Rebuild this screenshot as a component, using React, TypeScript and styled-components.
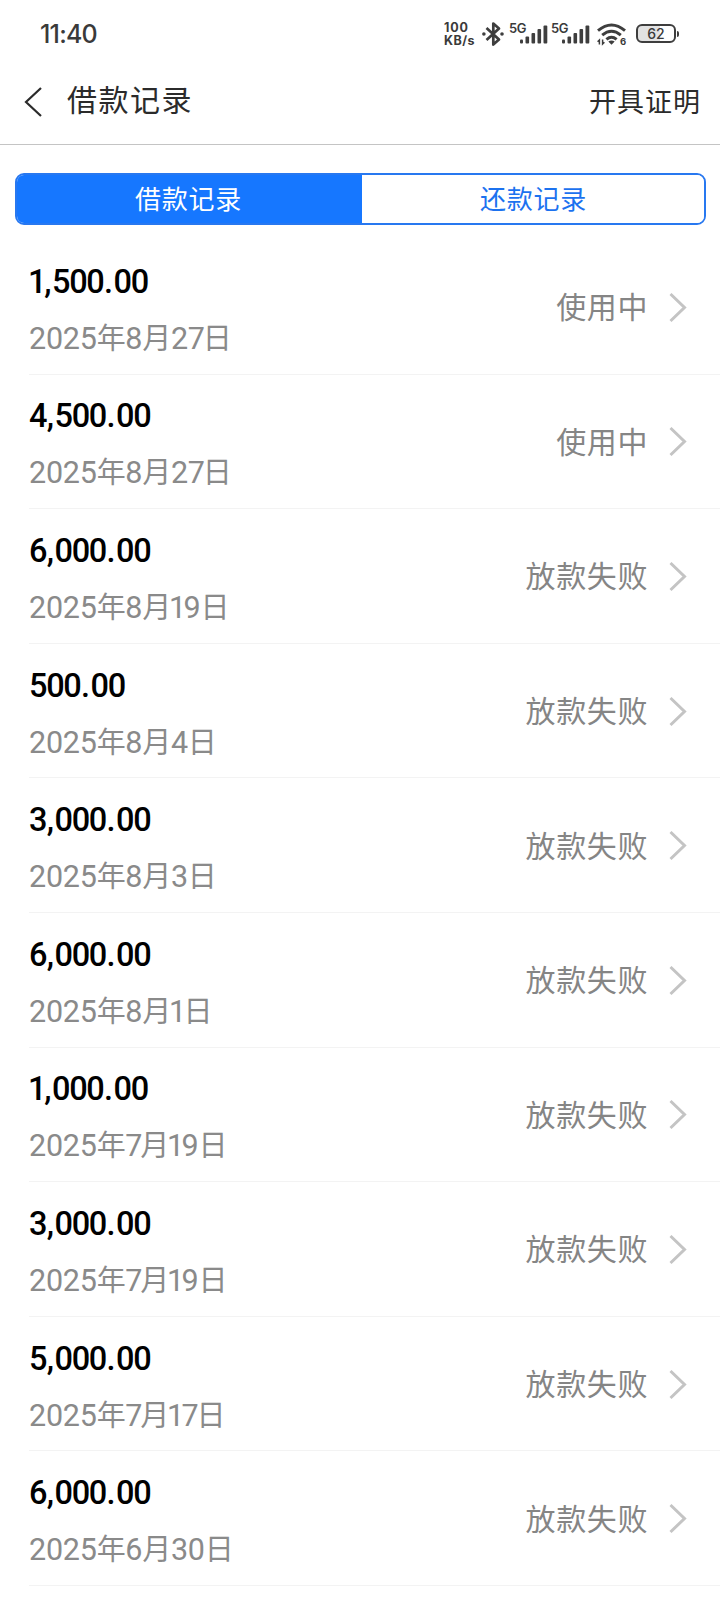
import React from "react";
import styled, { createGlobalStyle } from "styled-components";

const GlobalStyle = createGlobalStyle`
  * { box-sizing: border-box; }
  html, body { margin: 0; padding: 0; background: #fff; }
  body {
    width: 720px;
    height: 1600px;
    overflow: hidden;
    font-family: "Noto Sans CJK SC", "Noto Sans", sans-serif;
  }
`;

const Screen = styled.main`
  width: 720px;
  height: 1600px;
  overflow: hidden;
  background: #fff;
  display: flex;
  flex-direction: column;
`;

const StatusBar = styled.div`
  height: 66px;
  flex: none;
  display: flex;
  align-items: center;
  justify-content: space-between;
  padding: 0 41px 0 40px;
  color: #3a3a3a;
`;

const Clock = styled.span`
  font: 500 25px/30px Inter, sans-serif;
  letter-spacing: -0.8px;
  margin-top: 1px;
`;

const Indicators = styled.div`
  display: flex;
  align-items: center;
  height: 30px;
  margin-top: 1px;
`;

const NetSpeed = styled.div`
  width: 32px;
  flex: none;
  display: flex;
  flex-direction: column;
  font: 700 12.5px/13px Inter, sans-serif;
  margin-right: 6px;
  white-space: nowrap;
`;

const SpeedValue = styled.span`
  letter-spacing: 0.9px;
`;

const SpeedUnit = styled.span`
  letter-spacing: 0.5px;
`;

const Signal = styled.div`
  display: flex;
  flex: none;
  width: 42px;
  height: 24px;
`;

const Network = styled.span`
  font: 600 13px/13px Inter, sans-serif;
  width: 10.5px;
  letter-spacing: -0.5px;
  white-space: nowrap;
`;

const Glyph = styled.svg`
  display: block;
  flex: none;
  overflow: visible;
`;

const WifiBox = styled.div`
  display: flex;
  flex: none;
  align-items: flex-end;
  width: 30px;
  margin: 0 9px 0 4px;
`;

const WifiGeneration = styled.span`
  font: 700 9.5px/9px Inter, sans-serif;
  margin: 0 0 -1px -6px;
`;

const Battery = styled.div`
  width: 40px;
  flex: none;
  height: 19px;
  border: 2px solid #3e3e3e;
  border-radius: 6px;
  background: linear-gradient(90deg, #e2e2e2 62%, #fff 62%);
  display: flex;
  align-items: center;
  justify-content: center;
  font: 500 14px/15px Inter, sans-serif;
`;

const BatteryTip = styled.div`
  width: 2px;
  height: 6px;
  margin-left: 1px;
  border-radius: 0 2px 2px 0;
  background: #3e3e3e;
`;

const NavBar = styled.header`
  height: 79px;
  flex: none;
  display: flex;
  align-items: center;
  padding: 0 19px 9px 24px;
  border-bottom: 1px solid #c4c4c4;
  color: #2b2b2b;
`;

const Title = styled.h1`
  flex: 1;
  margin: 0 0 5px 25px;
  font-size: 30px;
  font-weight: 400;
  line-height: 40px;
  letter-spacing: 1.5px;
`;

const NavAction = styled.span`
  font-size: 27px;
  line-height: 36px;
  letter-spacing: 1px;
`;

const BackIcon = styled(Glyph)`
  margin-top: 3px;
`;

const Tabs = styled.nav`
  flex: none;
  display: flex;
  height: 52px;
  margin: 28px 14px 15px 15px;
  border: 2px solid #2878f0;
  border-radius: 9px;
  overflow: hidden;
`;

const Tab = styled.span<{ $active?: boolean }>`
  flex: ${(p) => (p.$active ? "0 0 345px" : "1")};
  display: flex;
  align-items: center;
  justify-content: center;
  padding: ${(p) => (p.$active ? "0 2px 3px 0" : "0 0 3px 1px")};
  font-size: 26px;
  letter-spacing: 0.7px;
  background: ${(p) => (p.$active ? "#1677ff" : "#fff")};
  color: ${(p) => (p.$active ? "#fff" : "#1c72ef")};
`;

const List = styled.ul`
  list-style: none;
  margin: 0;
  padding: 0 0 0 29px;
`;

const Row = styled.li`
  height: 134.6px;
  display: flex;
  align-items: center;
  justify-content: space-between;
  padding-right: 33px;
  border-bottom: 1px solid #f3f3f3;
`;

const Details = styled.div`
  display: flex;
  flex-direction: column;
  gap: 17px;
  padding-top: 7px;
`;

const Amount = styled.span`
  font: 500 32.5px/40px Roboto, sans-serif;
  color: #000;
`;

const DateText = styled.span`
  font-family: Roboto, "Noto Sans CJK SC", sans-serif;
  font-size: 30.5px;
  font-weight: 400;
  line-height: 40px;
  height: 40px;
  color: #8a8a8a;
`;

const Han = styled.span`
  font: 400 29px/1 "Noto Sans CJK SC", sans-serif;
  letter-spacing: -0.3px;
`;

const Digit = styled.span<{ $before: number; $after: number }>`
  margin-left: ${(p) => p.$before}px;
  letter-spacing: ${(p) => p.$after}px;
`;

const State = styled.div`
  display: flex;
  align-items: center;
  gap: 21px;
  color: #858585;
`;

const StateText = styled.span`
  font-size: 30px;
  line-height: 40px;
  letter-spacing: 0.6px;
  margin-bottom: 3px;
`;

const records = [
  ["1,500.00", "2025年8月27日", "使用中"],
  ["4,500.00", "2025年8月27日", "使用中"],
  ["6,000.00", "2025年8月19日", "放款失败"],
  ["500.00", "2025年8月4日", "放款失败"],
  ["3,000.00", "2025年8月3日", "放款失败"],
  ["6,000.00", "2025年8月1日", "放款失败"],
  ["1,000.00", "2025年7月19日", "放款失败"],
  ["3,000.00", "2025年7月19日", "放款失败"],
  ["5,000.00", "2025年7月17日", "放款失败"],
  ["6,000.00", "2025年6月30日", "放款失败"],
];

const RecordAmount = ({ value }: { value: string }) => (
  <Amount>
    {value.split("").map((c, i) => {
      const mark = c === "," || c === ".";
      return (
        <Digit
          key={i}
          $before={c === "1" ? -1 : mark ? 0.5 : 0}
          $after={mark ? 0.6 : c === "1" ? -2.8 : -1.35}
        >
          {c}
        </Digit>
      );
    })}
  </Amount>
);

const dateDigitSpacing = (c: string) => (c === "1" ? -2.6 : c === "7" ? -2.2 : -0.25);

const RecordDate = ({ value }: { value: string }) => (
  <DateText>
    {value.split("").map((c, i) =>
      /\d/.test(c) ? (
        <Digit key={i} $before={c === "1" ? -2 : 0} $after={dateDigitSpacing(c)}>{c}</Digit>
      ) : (
        <Han key={i}>{c}</Han>
      ),
    )}
  </DateText>
);

const Bluetooth = () => (
  <Glyph width="27" height="26" viewBox="0 0 27 26" fill="none" stroke="#3e3e3e" strokeWidth="2.7">
    <path d="M4.5 7 17 18.5 11.3 23.5V2.5L17 7.5 4.5 19" strokeLinejoin="round" />
    <circle cx="1.9" cy="13" r="1.8" fill="#3e3e3e" stroke="none" />
    <circle cx="20" cy="13" r="1.8" fill="#3e3e3e" stroke="none" />
  </Glyph>
);

const CellSignal = () => (
  <Signal>
    <Network>5G</Network>
    <Glyph width="28" height="24" viewBox="0 0 28 24" fill="#3e3e3e">
      <rect x="0" y="17.5" width="3" height="4" rx="1" />
      <rect x="5.5" y="14.5" width="3.6" height="7" rx="1" />
      <rect x="11.5" y="11" width="3.6" height="10.5" rx="1" />
      <rect x="17.5" y="7" width="3.6" height="14.5" rx="1" />
      <rect x="23.5" y="3.5" width="3.8" height="18" rx="1" />
    </Glyph>
  </Signal>
);

const Wifi = () => (
  <WifiBox>
    <Glyph width="29" height="22" viewBox="0 0 29 22" fill="none" stroke="#3e3e3e" strokeWidth="3">
      <path d="M1 7.6Q14.5-3.6 28 7.6" />
      <path d="M5.2 12.2Q14.5 4.4 23.8 12.2" />
      <path d="M9.4 16.4Q14.5 12.2 19.6 16.4" />
      <path d="M11.3 18.6Q14.5 16.2 17.7 18.6L14.5 21.8Z" fill="#3e3e3e" stroke="none" />
      <path d="M2.4 21.5V17L.6 18.8M5.6 16.5V21L7.4 19.2" strokeWidth="1.5" />
    </Glyph>
    <WifiGeneration>6</WifiGeneration>
  </WifiBox>
);

export default function App() {
  return (
    <>
      <GlobalStyle />
      <Screen>
        <StatusBar>
          <Clock>11:40</Clock>
          <Indicators>
            <NetSpeed>
              <SpeedValue>100</SpeedValue>
              <SpeedUnit>KB/s</SpeedUnit>
            </NetSpeed>
            <Bluetooth />
            <CellSignal />
            <CellSignal />
            <Wifi />
            <Battery>62</Battery>
            <BatteryTip />
          </Indicators>
        </StatusBar>
        <NavBar>
          <BackIcon width="18" height="30" viewBox="0 0 18 30" fill="none" stroke="#2b2b2b" strokeWidth="2.2">
            <path d="M17 1 2 15 17 29" />
          </BackIcon>
          <Title>借款记录</Title>
          <NavAction>开具证明</NavAction>
        </NavBar>
        <Tabs>
          <Tab $active>借款记录</Tab>
          <Tab>还款记录</Tab>
        </Tabs>
        <List>
          {records.map(([amount, date, state], i) => (
            <Row key={i}>
              <Details>
                <RecordAmount value={amount} />
                <RecordDate value={date} />
              </Details>
              <State>
                <StateText>{state}</StateText>
                <Glyph width="18" height="28" viewBox="0 0 18 28" fill="none" stroke="#c4c4c4" strokeWidth="3">
                  <path d="M1.5 1 15.5 14.5 1.5 28" />
                </Glyph>
              </State>
            </Row>
          ))}
        </List>
      </Screen>
    </>
  );
}
